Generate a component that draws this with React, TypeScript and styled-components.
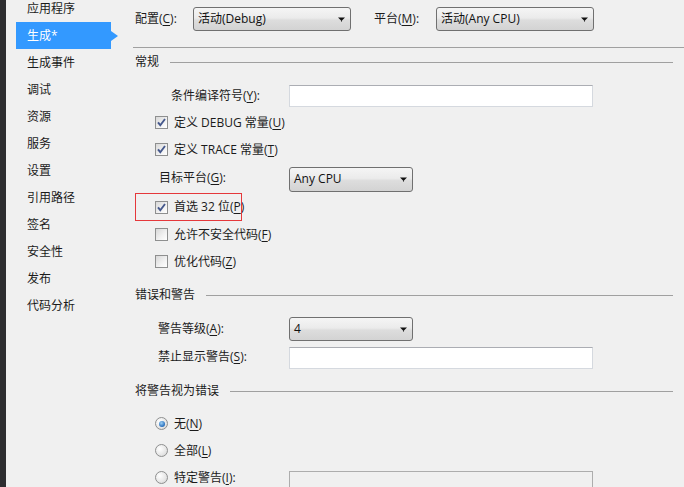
import React from "react";
import styled, { createGlobalStyle, css } from "styled-components";

const Global = createGlobalStyle`
  html, body { margin: 0; padding: 0; background: #F0F0F0; }
  body {
    font-family: "Open Sans", "Noto Sans CJK SC", sans-serif;
    font-size: 12px;
    color: #1b1b1b;
    overflow: hidden;
  }
  * { box-sizing: border-box; }
  u { text-decoration-thickness: 1px; text-underline-offset: 2px; }
`;

const Page = styled.div`
  display: flex;
  width: 684px;
  height: 487px;
  overflow: hidden;
  background: #F0F0F0;
`;

const Strip = styled.div`
  width: 6px;
  flex: none;
  background: #2D2D30;
`;

const Sidebar = styled.nav`
  width: 114px;
  flex: none;
  display: flex;
  flex-direction: column;
  padding-left: 10px;
  margin-top: -5px;
`;

const NavItem = styled.div<{ $active?: boolean }>`
  position: relative;
  flex: none;
  height: 27px;
  width: 95px;
  display: flex;
  align-items: center;
  padding-left: 11px;
  line-height: 14px;
  background: ${(p) => (p.$active ? "#3399FF" : "transparent")};
  color: ${(p) => (p.$active ? "#FFFFFF" : "#1b1b1b")};
  ${(p) =>
    p.$active &&
    css`
      &::after {
        content: "";
        position: absolute;
        right: -7px;
        top: 50%;
        margin-top: -5px;
        border-left: 7px solid #3399ff;
        border-top: 5px solid transparent;
        border-bottom: 5px solid transparent;
      }
    `}
`;

const Main = styled.main`
  flex: 1;
  display: flex;
  flex-direction: column;
  padding-left: 15px;
  padding-right: 11px;
`;

const TopBar = styled.div`
  flex: none;
  height: 38px;
  display: flex;
  align-items: center;
`;

const TopLabel = styled.span<{ $w: number; $ml?: number }>`
  width: ${(p) => p.$w}px;
  margin-left: ${(p) => p.$ml ?? 0}px;
  flex: none;
  line-height: 14px;
`;

const TopRule = styled.div`
  flex: none;
  height: 1px;
  margin: 9px -11px 0 -2px;
  background: #A0A0A0;
`;

const Section = styled.section<{ $mt: number }>`
  flex: none;
  margin-top: ${(p) => p.$mt}px;
  display: flex;
  flex-direction: column;
`;

const Heading = styled.div`
  flex: none;
  height: 20px;
  display: flex;
  align-items: center;
  gap: 11px;
  line-height: 14px;
  &::after {
    content: "";
    flex: 1;
    height: 1px;
    background: #A0A0A0;
  }
`;

const Rows = styled.div<{ $pt: number }>`
  flex: none;
  padding-top: ${(p) => p.$pt}px;
  display: flex;
  flex-direction: column;
`;

const FieldRow = styled.div<{ $h: number }>`
  flex: none;
  height: ${(p) => p.$h}px;
  display: grid;
  grid-template-columns: 154px 1fr;
  align-items: center;
`;

const FieldLabel = styled.span<{ $indent: number }>`
  padding-left: ${(p) => p.$indent}px;
  line-height: 14px;
  white-space: nowrap;
`;

const CheckRow = styled.label<{ $h: number }>`
  position: relative;
  flex: none;
  height: ${(p) => p.$h}px;
  display: flex;
  align-items: center;
  padding-left: 20px;
  line-height: 14px;
`;

const Highlight = styled.span`
  position: absolute;
  left: 0;
  top: 0;
  width: 107px;
  height: 28px;
  border: 1px solid #E5383B;
  pointer-events: none;
`;

const Box = styled.span`
  width: 13px;
  height: 13px;
  flex: none;
  margin-right: 6px;
  border: 1px solid #8E8F8F;
  background: linear-gradient(135deg, #D8D8D8 0%, #F2F2F2 60%, #FFFFFF 100%);
  display: inline-flex;
  align-items: center;
  justify-content: center;
`;

const RadioCircle = styled.span<{ $checked?: boolean }>`
  width: 13px;
  height: 13px;
  flex: none;
  margin-right: 6px;
  border-radius: 50%;
  border: 1px solid #8E8F8F;
  background: radial-gradient(circle at 35% 35%, #FFFFFF 0%, #E6E6E6 60%, #CFCFCF 100%);
  display: inline-flex;
  align-items: center;
  justify-content: center;
  &::after {
    content: "";
    display: ${(p) => (p.$checked ? "block" : "none")};
    width: 6px;
    height: 6px;
    border-radius: 50%;
    background: radial-gradient(circle at 40% 35%, #9DD0F5 0%, #2E74C0 65%, #1B4C85 100%);
  }
`;

const Combo = styled.div<{ $w: number; $h?: number; $mt?: number }>`
  width: ${(p) => p.$w}px;
  height: ${(p) => p.$h ?? 24}px;
  margin-top: ${(p) => p.$mt ?? 0}px;
  flex: none;
  border: 1px solid #707070;
  border-radius: 3px;
  background: linear-gradient(to bottom, #F5F5F5 0%, #EBEBEB 45%, #DDDDDD 55%, #D3D3D3 100%);
  display: flex;
  align-items: center;
  justify-content: space-between;
  padding: 0 5px 0 4px;
  line-height: 14px;
  color: #111;
`;

const TextInput = styled.div<{ $disabled?: boolean; $bottom?: boolean; $mt?: number }>`
  width: 304px;
  height: 22px;
  margin-top: ${(p) => p.$mt ?? 0}px;
  border: 1px solid #D5D9DF;
  border-top-color: #ABADB3;
  background: ${(p) => (p.$disabled ? "#F0F0F0" : "#FFFFFF")};
  ${(p) =>
    p.$disabled &&
    css`
      border-color: #ADADAD;
    `}
  ${(p) =>
    p.$bottom &&
    css`
      align-self: end;
      margin-bottom: -2px;
    `}
`;

const Arrow = () => (
  <svg width="7" height="5" viewBox="0 0 7 5">
    <path d="M0 0.5 H7 L3.5 4 Z" fill="#111" />
    <rect x="3" y="3.5" width="1" height="1" fill="#111" />
  </svg>
);

const Check = () => (
  <svg width="9" height="9" viewBox="0 0 9 9">
    <path d="M1 4.3 L3.3 7.2 L8 1" fill="none" stroke="#45588C" strokeWidth="1.9" />
  </svg>
);

const CheckItem: React.FC<{ checked?: boolean; h: number; highlight?: boolean; children: React.ReactNode }> = ({
  checked,
  h,
  highlight,
  children,
}) => (
  <CheckRow $h={h}>
    <Box>{checked && <Check />}</Box>
    <span>{children}</span>
    {highlight && <Highlight />}
  </CheckRow>
);

const navItems = [
  "应用程序",
  "生成*",
  "生成事件",
  "调试",
  "资源",
  "服务",
  "设置",
  "引用路径",
  "签名",
  "安全性",
  "发布",
  "代码分析",
];

export default function App() {
  return (
    <Page>
      <Global />
      <Strip />
      <Sidebar>
        {navItems.map((n) => (
          <NavItem key={n} $active={n === "生成*"}>
            {n}
          </NavItem>
        ))}
      </Sidebar>
      <Main>
        <TopBar>
          <TopLabel $w={58}>
            配置(<u>C</u>):
          </TopLabel>
          <Combo $w={158}>
            <span>活动(Debug)</span>
            <Arrow />
          </Combo>
          <TopLabel $w={62} $ml={23}>
            平台(<u>M</u>):
          </TopLabel>
          <Combo $w={158}>
            <span>活动(Any CPU)</span>
            <Arrow />
          </Combo>
        </TopBar>
        <TopRule />

        <Section $mt={4}>
          <Heading>常规</Heading>
          <Rows $pt={10}>
            <FieldRow $h={27}>
              <FieldLabel $indent={36}>
                条件编译符号(<u>Y</u>):
              </FieldLabel>
              <TextInput />
            </FieldRow>
            <CheckItem checked h={27}>
              定义 DEBUG 常量(<u>U</u>)
            </CheckItem>
            <CheckItem checked h={27}>
              定义 TRACE 常量(<u>T</u>)
            </CheckItem>
            <FieldRow $h={30}>
              <FieldLabel $indent={24}>
                目标平台(<u>G</u>):
              </FieldLabel>
              <Combo $w={124} $h={25} $mt={2}>
                <span>Any CPU</span>
                <Arrow />
              </Combo>
            </FieldRow>
            <CheckItem checked h={28} highlight>
              首选 32 位(<u>P</u>)
            </CheckItem>
            <CheckItem h={27}>
              允许不安全代码(<u>F</u>)
            </CheckItem>
            <CheckItem h={27}>
              优化代码(<u>Z</u>)
            </CheckItem>
          </Rows>
        </Section>

        <Section $mt={10}>
          <Heading>错误和警告</Heading>
          <Rows $pt={10}>
            <FieldRow $h={28}>
              <FieldLabel $indent={23}>
                警告等级(<u>A</u>):
              </FieldLabel>
              <Combo $w={124}>
                <span>4</span>
                <Arrow />
              </Combo>
            </FieldRow>
            <FieldRow $h={28}>
              <FieldLabel $indent={23}>
                禁止显示警告(<u>S</u>):
              </FieldLabel>
              <TextInput $mt={2} />
            </FieldRow>
          </Rows>
        </Section>

        <Section $mt={10}>
          <Heading>将警告视为错误</Heading>
          <Rows $pt={9}>
            <CheckRow $h={27}>
              <RadioCircle $checked />
              <span>
                无(<u>N</u>)
              </span>
            </CheckRow>
            <CheckRow $h={27}>
              <RadioCircle />
              <span>
                全部(<u>L</u>)
              </span>
            </CheckRow>
            <FieldRow $h={27}>
              <CheckRow $h={27}>
                <RadioCircle />
                <span>
                  特定警告(<u>I</u>):
                </span>
              </CheckRow>
              <TextInput $disabled $bottom />
            </FieldRow>
          </Rows>
        </Section>
      </Main>
    </Page>
  );
}
